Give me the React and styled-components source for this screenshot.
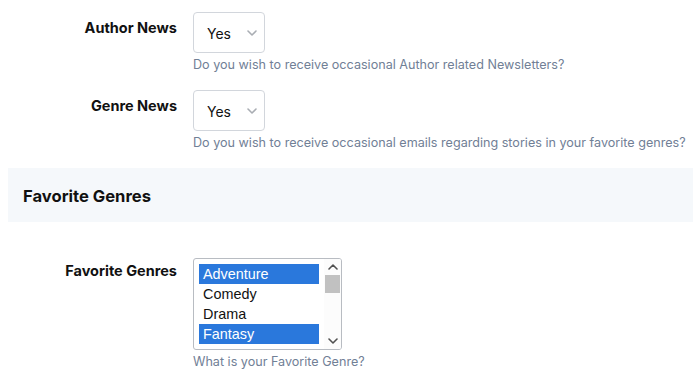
import styled, { createGlobalStyle } from "styled-components";

const GlobalStyle = createGlobalStyle`
  html, body {
    margin: 0;
    padding: 0;
    background: #ffffff;
    overflow: hidden;
  }
  body {
    font-family: "Inter", "Liberation Sans", sans-serif;
    color: #111;
  }
`;

const genres = [
  { name: "Adventure", selected: true },
  { name: "Comedy", selected: false },
  { name: "Drama", selected: false },
  { name: "Fantasy", selected: true },
];

function Chevron({ up }) {
  return (
    <svg width="10" height="6" viewBox="0 0 10 6">
      <path
        d={up ? "M1 5 L5 1 L9 5" : "M1 1 L5 5 L9 1"}
        fill="none"
        stroke="currentColor"
        strokeWidth="1.6"
        strokeLinecap="round"
        strokeLinejoin="round"
      />
    </svg>
  );
}

function App() {
  return (
    <>
      <GlobalStyle />
      <Page>
        <FieldRow $top={12}>
          <Label $offset={6}>Author News</Label>
          <Field>
            <Select>
              <span>Yes</span>
              <Arrow>
                <Chevron />
              </Arrow>
            </Select>
            <Help>Do you wish to receive occasional Author related Newsletters?</Help>
          </Field>
        </FieldRow>
        <FieldRow $top={16}>
          <Label $offset={6}>Genre News</Label>
          <Field>
            <Select>
              <span>Yes</span>
              <Arrow>
                <Chevron />
              </Arrow>
            </Select>
            <Help>Do you wish to receive occasional emails regarding stories in your favorite genres?</Help>
          </Field>
        </FieldRow>
        <Section>
          <h2>Favorite Genres</h2>
        </Section>
        <FieldRow $top={36}>
          <Label $offset={3}>Favorite Genres</Label>
          <Field>
            <ListBox>
              <Options>
                {genres.map((g) => (
                  <Option key={g.name} $selected={g.selected}>
                    {g.name}
                  </Option>
                ))}
              </Options>
              <Scrollbar>
                <ScrollButton>
                  <Chevron up />
                </ScrollButton>
                <Thumb />
                <Track />
                <ScrollButton>
                  <Chevron />
                </ScrollButton>
              </Scrollbar>
            </ListBox>
            <Help>What is your Favorite Genre?</Help>
          </Field>
        </FieldRow>
      </Page>
    </>
  );
}

const Page = styled.div`
  padding-left: 8px;
  display: flex;
  flex-direction: column;
`;

const FieldRow = styled.div`
  display: grid;
  grid-template-columns: 169px 1fr;
  column-gap: 16px;
  margin-top: ${(p) => p.$top}px;
`;

const Label = styled.div`
  text-align: right;
  font-size: 14.5px;
  line-height: 20px;
  font-weight: 700;
  color: #111;
  padding-top: ${(p) => p.$offset}px;
`;

const Field = styled.div`
  display: flex;
  flex-direction: column;
  align-items: flex-start;
`;

const Select = styled.div`
  box-sizing: border-box;
  width: 72px;
  height: 41px;
  border: 1px solid #d2d6dc;
  border-radius: 4px;
  display: flex;
  align-items: center;
  justify-content: space-between;
  padding: 0 7px 0 13px;
  font-size: 14px;
  color: #111;
  background: #fff;
  span {
    padding-top: 1px;
  }
`;

const Arrow = styled.span`
  display: flex;
  color: #a9adb3;
  padding-top: 1px;
`;

const Help = styled.div`
  margin-top: 3px;
  font-size: 12.6px;
  line-height: 18px;
  color: #718096;
  white-space: nowrap;
`;

const Section = styled.div`
  margin-top: 16px;
  height: 54px;
  background: #f5f8fb;
  display: flex;
  align-items: center;
  padding-left: 15px;
  h2 {
    margin: 0;
    font-size: 16.6px;
    line-height: 20px;
    font-weight: 700;
    color: #111;
    padding-top: 2px;
  }
`;

const ListBox = styled.div`
  box-sizing: border-box;
  width: 149px;
  height: 92px;
  border: 1px solid #b8bcc2;
  border-radius: 3px;
  display: flex;
  overflow: hidden;
  background: #fff;
`;

const Options = styled.div`
  width: 120px;
  padding: 5px 0 0 5px;
  display: flex;
  flex-direction: column;
  font-family: "Liberation Sans", Arial, sans-serif;
  font-size: 14.4px;
`;

const Option = styled.div`
  height: 20px;
  line-height: 20px;
  padding-left: 4px;
  flex-shrink: 0;
  background: ${(p) => (p.$selected ? "#2a78dc" : "transparent")};
  color: ${(p) => (p.$selected ? "#ffffff" : "#111")};
`;

const Scrollbar = styled.div`
  margin-left: auto;
  width: 17px;
  display: flex;
  flex-direction: column;
  background: #fcfcfc;
`;

const ScrollButton = styled.div`
  height: 16px;
  display: flex;
  align-items: center;
  justify-content: center;
  color: #505050;
`;

const Thumb = styled.div`
  height: 18px;
  margin: 0 1px;
  background: #c1c1c1;
`;

const Track = styled.div`
  flex: 1;
`;

export default App;
